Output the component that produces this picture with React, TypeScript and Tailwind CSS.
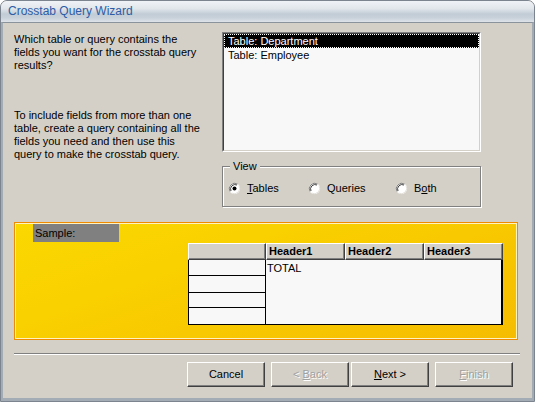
import React from 'react';

const raised =
  'border border-t-white border-l-white border-r-[#404040] border-b-[#404040] shadow-[inset_-1px_-1px_0_#808080]';

function Radio({ label, checked, hotkey }: { label: string; checked?: boolean; hotkey?: number }) {
  return (
    <div className="flex items-center gap-[6px]">
      <svg width="13" height="13" viewBox="0 0 13 13" className="shrink-0">
        <circle cx="6.5" cy="6.5" r="5.5" fill="#fff" />
        <path d="M2 9.5 A5.5 5.5 0 0 1 9.5 2" fill="none" stroke="#808080" strokeWidth="1" />
        <path d="M3 9 A4.5 4.5 0 0 1 9 3" fill="none" stroke="#404040" strokeWidth="1" />
        <path d="M11 3.5 A5.5 5.5 0 0 1 3.5 11" fill="none" stroke="#e4e1da" strokeWidth="1" />
        {checked && <circle cx="6.5" cy="6.5" r="2" fill="#000" />}
      </svg>
      {hotkey === undefined ? (
        <span>{label}</span>
      ) : (
        <span>
          {label.slice(0, hotkey)}
          <span className="underline">{label[hotkey]}</span>
          {label.slice(hotkey + 1)}
        </span>
      )}
    </div>
  );
}

function Button({ children, disabled }: { children: React.ReactNode; disabled?: boolean }) {
  return (
    <div
      className={`flex h-[25px] w-[78px] shrink-0 items-center justify-center whitespace-pre bg-[#d4d0c8] ${raised} ${
        disabled ? 'text-[#a0a0a0] [text-shadow:1px_1px_0_#fff]' : 'text-black'
      }`}
    >
      {children}
    </div>
  );
}

export default function App() {
  const rowHeights = [16, 17, 15, 17];

  return (
    <div className="h-[402px] w-[535px] bg-white font-['Liberation_Sans',Arial,sans-serif] text-[11px] leading-[13px] text-black">
      <div className="flex h-full flex-col overflow-hidden rounded-t-[7px] border border-[#7c858f] bg-[#d4d0c8]">
        {/* title bar */}
        <div className="flex h-[21px] shrink-0 items-center bg-[linear-gradient(to_bottom,#f0f3f6_0%,#e2e7ec_35%,#c2ccd6_62%,#c8d1da_80%,#dde3e9_100%)] pl-[7px]">
          <span className="text-[12px] text-[#2d5ca6]">Crosstab Query Wizard</span>
        </div>

        <div className="flex flex-1 flex-col border-x-2 border-b-[3px] border-t border-[#a3abb4] border-t-[#8a939c] pl-[11px] pt-[9px]">
          {/* top row */}
          <div className="flex">
            <div className="w-[208px] pt-[1px]">
              <p>
                Which table or query contains the
                <br />
                fields you want for the crosstab query
                <br />
                results?
              </p>
              <p className="mt-[37px]">
                To include fields from more than one
                <br />
                table, create a query containing all the
                <br />
                fields you need and then use this
                <br />
                query to make the crosstab query.
              </p>
            </div>

            <div className="w-[259px]">
              {/* list box */}
              <div className="h-[120px] border border-t-[#808080] border-l-[#808080] border-r-white border-b-white">
                <div className="h-full border border-t-[#404040] border-l-[#404040] border-r-[#d4d0c8] border-b-[#d4d0c8] bg-[#f8f8f8]">
                  <div className="flex h-[14px] items-center bg-black px-[4px] text-white outline-1 outline-dotted outline-offset-[-1px] outline-white">
                    Table: Department
                  </div>
                  <div className="flex h-[14px] items-center px-[4px]">Table: Employee</div>
                </div>
              </div>

              {/* view group */}
              <div className="relative mt-[14px] h-[41px] border border-[#808080] shadow-[1px_1px_0_#fff,inset_1px_1px_0_#fff]">
                <span className="absolute -top-[7px] left-[7px] bg-[#d4d0c8] px-[3px]">View</span>
                <div className="flex items-center pl-[5px] pt-[15px]">
                  <div className="w-[80px]">
                    <Radio label="Tables" hotkey={0} checked />
                  </div>
                  <div className="w-[87px]">
                    <Radio label="Queries" />
                  </div>
                  <Radio label="Both" hotkey={1} />
                </div>
              </div>
            </div>
          </div>

          {/* sample panel */}
          <div className="mt-[15px] h-[118px] w-[504px] border border-[#f08a00] bg-[#f08a00]">
            <div className="flex h-full flex-col border border-[#fff3c0] bg-[linear-gradient(160deg,#fbd800_0%,#f9d000_35%,#f8c800_60%,#f6bd00_100%)]">
              <div className="ml-[17px] flex h-[18px] w-[86px] items-center bg-[#808080] pl-[2px]">Sample:</div>
              <div className="ml-[172px] mt-[1px] flex w-[315px] flex-col">
                <div className="flex h-[17px]">
                  <div className={`w-[78px] bg-[#d4d0c8] ${raised}`} />
                  {['Header1', 'Header2', 'Header3'].map((h) => (
                    <div
                      key={h}
                      className={`flex w-[79px] items-center bg-[#d4d0c8] pl-[2px] font-bold ${raised}`}
                    >
                      {h}
                    </div>
                  ))}
                </div>
                <div className="flex">
                  <div className="flex w-[78px] flex-col border-l border-black">
                    {rowHeights.map((h, i) => (
                      <div
                        key={i}
                        className="border-b border-r border-black bg-[#f8f8f8]"
                        style={{ height: h }}
                      />
                    ))}
                  </div>
                  <div className="flex-1 border-b border-r-2 border-black bg-[#f8f8f8] pl-[1px] pt-[2px]">TOTAL</div>
                </div>
              </div>
            </div>
          </div>

          {/* separator */}
          <div className="mt-[13px] mr-[12px] h-[2px] border-t border-b border-t-[#808080] border-b-white" />

          {/* buttons */}
          <div className="mt-[7px] flex pl-[173px]">
            <Button>Cancel</Button>
            <div className="ml-[6px]">
              <Button disabled>
                {'< '}
                <span className="underline">B</span>
                {'ack'}
              </Button>
            </div>
            <div className="ml-[2px]">
              <Button>
                <span className="underline">N</span>
                {'ext >'}
              </Button>
            </div>
            <div className="ml-[6px]">
              <Button disabled>
                <span className="underline">F</span>
                {'inish'}
              </Button>
            </div>
          </div>
        </div>
      </div>
    </div>
  );
}
